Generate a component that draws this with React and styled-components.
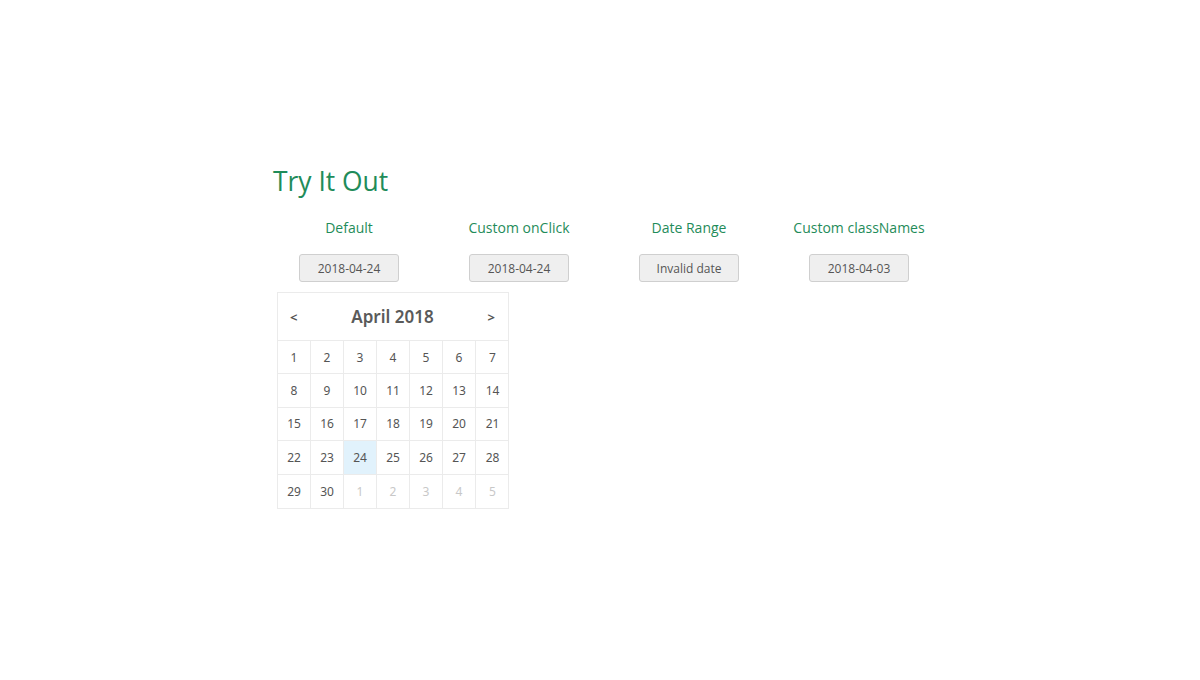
import React from "react";
import styled, { createGlobalStyle } from "styled-components";

const Global = createGlobalStyle`
  html, body { margin: 0; padding: 0; background: #fff; }
  body { font-family: "Open Sans", "Noto Sans", sans-serif; }
`;

const Page = styled.div`
  width: 654px;
  margin: 0 auto;
  padding-top: 166px;
`;

const Title = styled.h2`
  margin: 0;
  font-family: "Open Sans", sans-serif;
  font-weight: 400;
  font-size: 26.4px;
  line-height: 31px;
  color: #1f8c5a;
`;

const Columns = styled.div`
  display: grid;
  grid-template-columns: repeat(4, 152px);
  column-gap: 18px;
  align-items: start;
  margin-top: 21px;
`;

const Column = styled.div`
  display: flex;
  flex-direction: column;
  align-items: center;
`;

const Label = styled.div`
  font-size: 14px;
  line-height: 20px;
  color: #1f8c5a;
`;

const DateButton = styled.button`
  margin-top: 16px;
  width: 100px;
  height: 28px;
  box-sizing: border-box;
  background: #efefef;
  border: 1px solid #cfcfcf;
  border-radius: 3px;
  font-family: "Open Sans", sans-serif;
  font-size: 12px;
  color: #555;
  padding: 0;
`;

const Calendar = styled.div`
  align-self: flex-start;
  flex: none;
  margin: 10px 0 0 4px;
  width: 232px;
  box-sizing: border-box;
  border: 1px solid #ebebeb;
  background: #fff;
  font-family: "Noto Sans", "DejaVu Sans", sans-serif;
  color: #555;
`;

const Header = styled.div`
  height: 47px;
  display: flex;
  align-items: center;
  justify-content: space-between;
  padding: 0 13px 0 12px;
  border-bottom: 1px solid #ebebeb;
`;

const Arrow = styled.span`
  font-weight: 700;
  font-size: 13px;
  color: #555;
`;

const Month = styled.span`
  font-size: 17px;
  font-weight: 600;
  color: #5a5a5a;
`;

const Grid = styled.div`
  display: grid;
  grid-template-columns: repeat(7, 33px);
  grid-auto-rows: 33.4px;
`;

const Day = styled.div`
  box-sizing: border-box;
  display: flex;
  align-items: center;
  justify-content: center;
  font-size: 12px;
  border-right: ${(p) => (p.$lastCol ? "none" : "1px solid #ebebeb")};
  border-bottom: ${(p) => (p.$lastRow ? "none" : "1px solid #ebebeb")};
  color: ${(p) => (p.$muted ? "#c8c8c8" : "#555")};
  background: ${(p) => (p.$selected ? "#e1f2fc" : "transparent")};
`;

const days = [];
for (let i = 1; i <= 30; i++) days.push({ n: i, muted: false });
for (let i = 1; i <= 5; i++) days.push({ n: i, muted: true });

export default function App() {
  return (
    <>
      <Global />
      <Page>
        <Title>Try It Out</Title>
        <Columns>
          <Column>
            <Label>Default</Label>
            <DateButton>2018-04-24</DateButton>
            <Calendar>
              <Header>
                <Arrow>&lt;</Arrow>
                <Month>April 2018</Month>
                <Arrow>&gt;</Arrow>
              </Header>
              <Grid>
                {days.map((d, i) => (
                  <Day
                    key={i}
                    $muted={d.muted}
                    $selected={!d.muted && d.n === 24}
                    $lastCol={i % 7 === 6}
                    $lastRow={i >= 28}
                  >
                    {d.n}
                  </Day>
                ))}
              </Grid>
            </Calendar>
          </Column>
          <Column>
            <Label>Custom onClick</Label>
            <DateButton>2018-04-24</DateButton>
          </Column>
          <Column>
            <Label>Date Range</Label>
            <DateButton>Invalid date</DateButton>
          </Column>
          <Column>
            <Label>Custom classNames</Label>
            <DateButton>2018-04-03</DateButton>
          </Column>
        </Columns>
      </Page>
    </>
  );
}
